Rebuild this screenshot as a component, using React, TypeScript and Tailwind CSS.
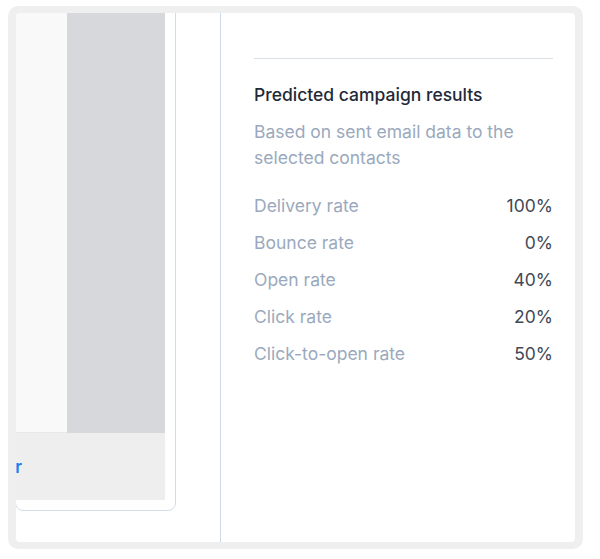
import React from "react";

const stats = [
  { label: "Delivery rate", value: "100%" },
  { label: "Bounce rate", value: "0%" },
  { label: "Open rate", value: "40%" },
  { label: "Click rate", value: "20%" },
  { label: "Click-to-open rate", value: "50%" },
];

export default function App() {
  return (
    <div className="h-[559px] w-[600px] bg-white pl-[8px] pt-[6px] font-['Inter',sans-serif]">
      <div className="h-[543px] w-[575px] rounded-[10px] bg-[#efefef] px-[8px] py-[7px]">
        <div className="flex h-full w-full overflow-hidden rounded-[4px] bg-white">
          {/* email preview, clipped on the left */}
          <div className="flex w-[204px] shrink-0 flex-col overflow-hidden pb-[31px] pr-[44px]">
            <div className="-ml-px -mt-[12px] flex flex-1 flex-col rounded-lg border border-[#d3dce7] pb-[10px] pr-[10px] pt-[11px]">
              <div className="flex flex-1">
                <div className="w-[51px] border-b border-[#e6e8ec] bg-[#f9f9f9]" />
                <div className="flex-1 bg-[#d7d8dc]" />
              </div>
              <div className="flex h-[67px] items-center bg-[#eeeeee] pt-[3px]">
                <div className="flex w-[6px] shrink-0 justify-end whitespace-nowrap">
                  <span className="text-[17px] font-semibold text-[#1a7ff0]">Open editor</span>
                </div>
              </div>
            </div>
          </div>

          <div className="flex-1 border-l border-[#cbd8e6] pl-[33px] pr-[22px] pt-[45px]">
            <div className="h-px bg-[#d9dee4]" />
            <h2 className="mt-[24px] text-[17.5px] font-medium leading-[24px] text-[#1f2937]">
              Predicted campaign results
            </h2>
            <p className="mt-[12px] text-[17.5px] leading-[26px] text-[#9aa9bd]">
              Based on sent email data to the selected contacts
            </p>
            <div className="mt-[23px] flex flex-col gap-[13px]">
              {stats.map((s) => (
                <div key={s.label} className="flex items-center justify-between text-[17.5px] leading-[24px]">
                  <span className="text-[#9aa9bd]">{s.label}</span>
                  <span className="text-[#3f4856]">{s.value}</span>
                </div>
              ))}
            </div>
          </div>
        </div>
      </div>
    </div>
  );
}
